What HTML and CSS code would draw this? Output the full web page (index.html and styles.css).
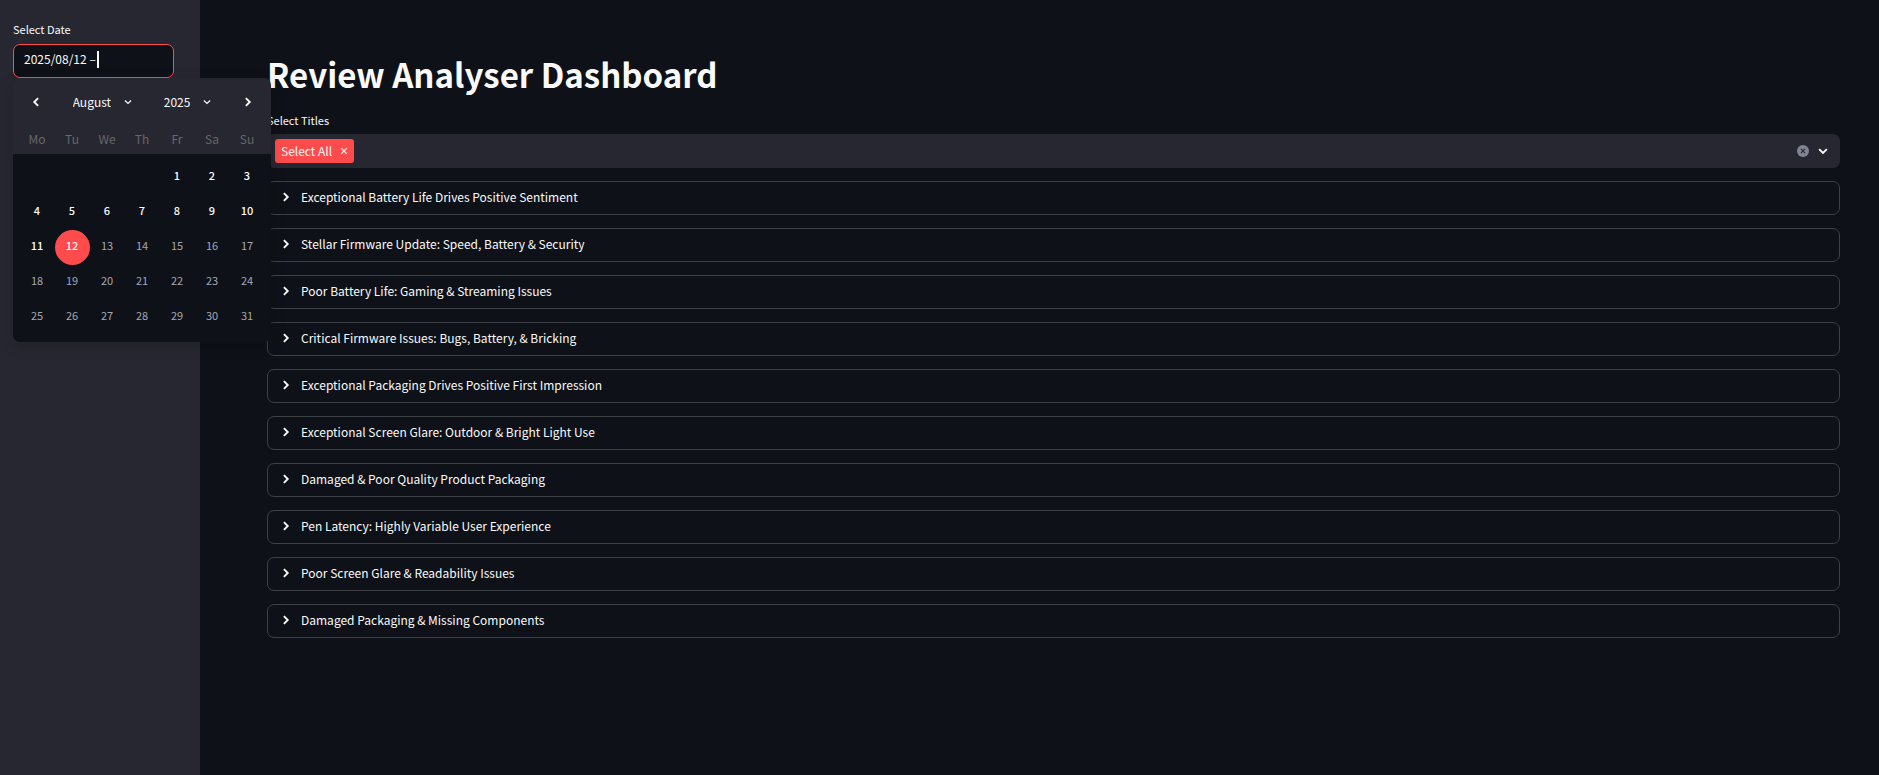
FILE: index.html
```
<!DOCTYPE html>
<html lang="en">
<head>
<meta charset="utf-8">
<title>Review Analyser Dashboard</title>
<link rel="stylesheet" href="styles.css">
</head>
<body>
<svg class="sprite" aria-hidden="true">
  <symbol id="right" viewBox="0 0 8 8"><path d="M2.3 0.9 5.4 4 2.3 7.1"/></symbol>
  <symbol id="left" viewBox="0 0 8 8"><path d="M5.7 0.9 2.6 4 5.7 7.1"/></symbol>
  <symbol id="down" viewBox="0 0 8 8"><path d="M0.9 2.5 4 5.5 7.1 2.5"/></symbol>
  <symbol id="cross" viewBox="0 0 8 8"><path d="m1.2 1.2 5.6 5.6M6.8 1.2 1.2 6.8"/></symbol>
</svg>
<div class="app">
  <aside class="sidebar">
    <label class="label" for="date">Select Date</label>
    <div class="date-box">
      <input class="date-input" id="date" type="text" value="2025/08/12 –">
      <span class="caret"></span>
    </div>
    <div class="anchor">
      <div class="calendar">
        <div class="cal-head">
          <button class="nav" type="button" aria-label="Previous month"><svg class="icon"><use href="#left"/></svg></button>
          <div class="picker"><select class="month" aria-label="Month"><option>August</option></select><svg class="icon small"><use href="#down"/></svg></div>
          <div class="picker"><select class="year" aria-label="Year"><option>2025</option></select><svg class="icon small"><use href="#down"/></svg></div>
          <button class="nav" type="button" aria-label="Next month"><svg class="icon"><use href="#right"/></svg></button>
        </div>
        <table class="days">
          <thead><tr><th>Mo</th><th>Tu</th><th>We</th><th>Th</th><th>Fr</th><th>Sa</th><th>Su</th></tr></thead>
          <tbody>
            <tr><td></td><td></td><td></td><td></td><td><button class="day">1</button></td><td><button class="day">2</button></td><td><button class="day">3</button></td></tr>
            <tr><td><button class="day">4</button></td><td><button class="day">5</button></td><td><button class="day">6</button></td><td><button class="day">7</button></td><td><button class="day">8</button></td><td><button class="day">9</button></td><td><button class="day">10</button></td></tr>
            <tr><td><button class="day">11</button></td><td><button class="day selected">12</button></td><td><button class="day" disabled>13</button></td><td><button class="day" disabled>14</button></td><td><button class="day" disabled>15</button></td><td><button class="day" disabled>16</button></td><td><button class="day" disabled>17</button></td></tr>
            <tr><td><button class="day" disabled>18</button></td><td><button class="day" disabled>19</button></td><td><button class="day" disabled>20</button></td><td><button class="day" disabled>21</button></td><td><button class="day" disabled>22</button></td><td><button class="day" disabled>23</button></td><td><button class="day" disabled>24</button></td></tr>
            <tr><td><button class="day" disabled>25</button></td><td><button class="day" disabled>26</button></td><td><button class="day" disabled>27</button></td><td><button class="day" disabled>28</button></td><td><button class="day" disabled>29</button></td><td><button class="day" disabled>30</button></td><td><button class="day" disabled>31</button></td></tr>
          </tbody>
        </table>
      </div>
    </div>
  </aside>
  <main class="main">
    <h1 class="title">Review Analyser Dashboard</h1>
    <label class="label" for="titles">Select Titles</label>
    <div class="multiselect">
      <span class="tag">Select All<button class="plain" type="button" aria-label="Remove Select All"><svg class="icon small"><use href="#cross"/></svg></button></span>
      <input class="search" id="titles" type="text">
      <button class="clear" type="button" aria-label="Clear all"><svg class="icon tiny"><use href="#cross"/></svg></button>
      <button class="plain" type="button" aria-label="Open list"><svg class="icon"><use href="#down"/></svg></button>
    </div>
    <div class="list">
      <details class="expander"><summary><svg class="icon"><use href="#right"/></svg>Exceptional Battery Life Drives Positive Sentiment</summary></details>
      <details class="expander"><summary><svg class="icon"><use href="#right"/></svg>Stellar Firmware Update: Speed, Battery &amp; Security</summary></details>
      <details class="expander"><summary><svg class="icon"><use href="#right"/></svg>Poor Battery Life: Gaming &amp; Streaming Issues</summary></details>
      <details class="expander"><summary><svg class="icon"><use href="#right"/></svg>Critical Firmware Issues: Bugs, Battery, &amp; Bricking</summary></details>
      <details class="expander"><summary><svg class="icon"><use href="#right"/></svg>Exceptional Packaging Drives Positive First Impression</summary></details>
      <details class="expander"><summary><svg class="icon"><use href="#right"/></svg>Exceptional Screen Glare: Outdoor &amp; Bright Light Use</summary></details>
      <details class="expander"><summary><svg class="icon"><use href="#right"/></svg>Damaged &amp; Poor Quality Product Packaging</summary></details>
      <details class="expander"><summary><svg class="icon"><use href="#right"/></svg>Pen Latency: Highly Variable User Experience</summary></details>
      <details class="expander"><summary><svg class="icon"><use href="#right"/></svg>Poor Screen Glare &amp; Readability Issues</summary></details>
      <details class="expander"><summary><svg class="icon"><use href="#right"/></svg>Damaged Packaging &amp; Missing Components</summary></details>
    </div>
  </main>
</div>
</body>
</html>
```
FILE: styles.css
```
* { box-sizing: border-box; }
body {
  margin: 0;
  background: #0e1117;
  color: #fafafa;
  font-family: "Source Sans Pro", "Noto Sans CJK SC", "Noto Sans", sans-serif;
  font-size: 12px;
  font-weight: 400;
  line-height: 20px;
}
button, input, select { font: inherit; color: inherit; border: 0; padding: 0; margin: 0; background: none; outline: 0; }
.sprite { position: absolute; width: 0; height: 0; }
.icon { display: block; flex: none; width: 10px; height: 10px; fill: none; stroke: currentColor; stroke-width: 1.5; }
.icon.small { width: 8px; height: 8px; stroke-width: 1.2; }
.icon.tiny { width: 6px; height: 6px; }
.app { display: flex; min-height: 100vh; }
.sidebar { flex: none; width: 200px; padding: 19px 26px 20px 13px; background: #262730; }
.label { display: block; font-size: 11px; }
.date-box {
  display: flex; align-items: center;
  height: 34px; margin-top: 5px; padding: 0 10px 4px;
  border: 1px solid #ff4b4b; border-radius: 7px; background: #0e1117;
}
.date-input { field-sizing: content; padding-right: 1px; }
.caret { width: 2px; height: 17px; background: #fafafa; }
.anchor { position: relative; }
.calendar {
  position: absolute; top: 0; left: 0; z-index: 1;
  width: 258px; padding-bottom: 7px; overflow: hidden;
  border-radius: 7px;
  background: linear-gradient(#262730 76px, #0e1117 76px);
  box-shadow: 0 4px 16px rgba(0, 0, 0, .16);
}
.cal-head { display: flex; align-items: center; justify-content: space-between; height: 48px; padding: 0 18px; }
.picker { display: flex; align-items: center; gap: 13px; }
.picker select { appearance: none; field-sizing: content; }
.days { margin: 0 auto; border-collapse: separate; border-spacing: 0; table-layout: fixed; width: 245px; }
.days th { height: 34px; padding: 0 0 8px; color: #676767; font-weight: 400; }
.days td { height: 35px; padding: 0; }
.day { display: block; width: 35px; height: 35px; padding-bottom: 5px; border-radius: 50%; font-size: 11px; font-weight: 500; text-align: center; }
.day:disabled { color: #a3a8b4; font-weight: 400; }
.day.selected { background: #ff4b4b; }
.main { flex: 1; min-width: 0; padding: 46px 39px 48px 67px; }
.title { margin: 0 0 8px; font-size: 33px; line-height: 56px; font-weight: 700; }
.multiselect { display: flex; align-items: center; height: 34px; margin-top: 4px; padding: 0 12px 0 8px; border-radius: 7px; background: #262730; }
.tag { display: flex; align-items: center; gap: 8px; height: 24px; padding: 0 6px 1px; border-radius: 3px; background: #ff4b4b; }
.search { flex: 1; min-width: 0; }
.clear { display: grid; place-items: center; width: 12px; height: 12px; margin-right: 9px; border-radius: 50%; background: #808495; color: #262730; }
.list { display: grid; gap: 13px; margin-top: 13px; }
.expander { border: 1px solid #3d4045; border-radius: 7px; }
.expander summary { display: flex; align-items: center; gap: 10px; height: 32px; padding: 0 13px 2px; list-style: none; cursor: pointer; }
```
